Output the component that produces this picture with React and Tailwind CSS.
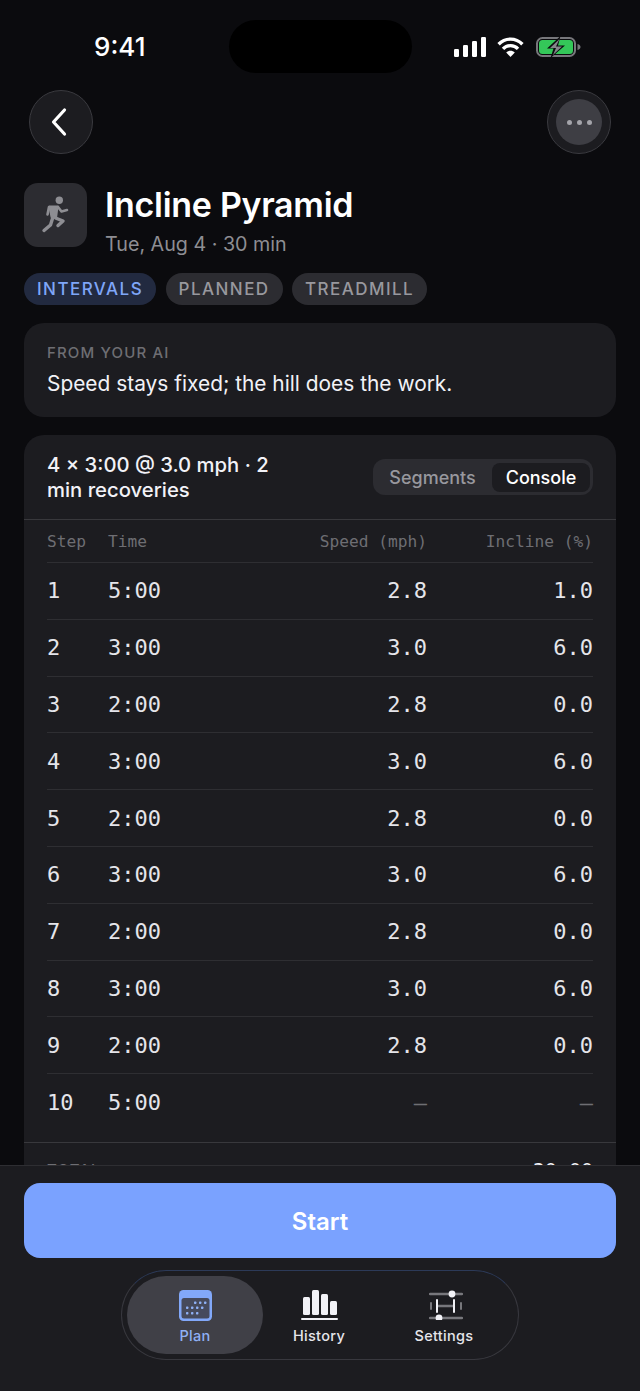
import React from "react";

const rows = [
  ["1", "5:00", "2.8", "1.0"],
  ["2", "3:00", "3.0", "6.0"],
  ["3", "2:00", "2.8", "0.0"],
  ["4", "3:00", "3.0", "6.0"],
  ["5", "2:00", "2.8", "0.0"],
  ["6", "3:00", "3.0", "6.0"],
  ["7", "2:00", "2.8", "0.0"],
  ["8", "3:00", "3.0", "6.0"],
  ["9", "2:00", "2.8", "0.0"],
  ["10", "5:00", "—", "—"],
];

const sans = "font-['Inter','Liberation_Sans',sans-serif]";
const mono = "font-['DejaVu_Sans_Mono','Liberation_Mono',monospace]";

function Signal() {
  return (
    <svg width="32" height="20" viewBox="0 0 32 20" fill="#fff">
      <rect x="0" y="12" width="5" height="8" rx="1.2" />
      <rect x="9" y="8" width="5" height="12" rx="1.2" />
      <rect x="18" y="4" width="5" height="16" rx="1.2" />
      <rect x="27" y="0" width="5" height="20" rx="1.2" />
    </svg>
  );
}

function Wifi() {
  return (
    <svg width="27" height="20" viewBox="0 0 27 20" fill="none" stroke="#fff" strokeWidth="3.4">
      <path d="M1.6 7.2 C8.2 0.4 18.8 0.4 25.4 7.2" />
      <path d="M6 11.8 C10 7.6 17 7.6 21 11.8" />
      <path d="M13.5 20 L9.2 15.4 C11.6 13.2 15.4 13.2 17.8 15.4 Z" fill="#fff" stroke="none" />
    </svg>
  );
}

function Battery() {
  return (
    <svg width="45" height="20" viewBox="0 0 45 20" fill="none">
      <rect x="1" y="1" width="38" height="18" rx="5.5" stroke="#77777b" strokeWidth="2" />
      <rect x="3" y="3" width="34" height="14" rx="3.5" fill="#34c759" />
      <path d="M41.5 7 C43.5 7.5 44.5 8.6 44.5 10 C44.5 11.4 43.5 12.5 41.5 13 Z" fill="#77777b" />
      <path d="M24.5 -1 L11 11.5 H17.5 L14.5 21 L29 8.5 H22 Z" fill="#0b0b0e" />
      <path d="M23.5 2 L14 11 H20 L17 18 L26 9.5 H20 Z" fill="#85858a" />
    </svg>
  );
}

function Runner() {
  return (
    <svg width="30" height="38" viewBox="0 0 30 38" fill="none" stroke="#8e8e93" strokeLinecap="round" strokeLinejoin="round">
      <circle cx="18.3" cy="4.2" r="3.7" fill="#8e8e93" stroke="none" />
      <path d="M8.5 10.5 H16.5 L15 22 L10.5 21 Z" fill="#8e8e93" strokeWidth="2" />
      <path d="M8 11 L6.5 18.5" strokeWidth="2.6" />
      <path d="M17 11 L20.5 15.5 L26 14" strokeWidth="2.6" />
      <path d="M14.5 22 L22 25 L17 29.5" strokeWidth="3.4" />
      <path d="M11.5 22.5 L9.5 29 L3 34.5" strokeWidth="3.4" />
    </svg>
  );
}

function CalendarIcon() {
  return (
    <svg width="33" height="31" viewBox="0 0 33 31">
      <rect width="33" height="31" rx="4.5" fill="#82a8f9" />
      <rect x="2.5" y="8" width="28" height="20.5" rx="2.5" fill="#464a5c" />
      <g fill="#8fb0f5">
        {[[15, 11.5], [20, 11.5], [25, 11.5], [7, 16.5], [12, 16.5], [17, 16.5], [22, 16.5], [7, 22], [12, 22], [17, 22]].map(([x, y]) => (
          <rect key={`${x}-${y}`} x={x} y={y} width="2.4" height="2.4" rx="0.7" />
        ))}
      </g>
    </svg>
  );
}

function ChartIcon() {
  return (
    <svg width="37" height="30" viewBox="0 0 37 30" fill="#f2f2f7">
      <rect x="2" y="7" width="7" height="18" rx="1.5" />
      <rect x="11" y="0" width="7" height="25" rx="1.5" />
      <rect x="20" y="4" width="7" height="21" rx="1.5" />
      <rect x="29" y="11" width="7" height="14" rx="1.5" />
      <rect x="0" y="28" width="37" height="2" rx="1" />
    </svg>
  );
}

function SettingsIcon() {
  return (
    <svg className="ml-[4px]" width="34" height="30" viewBox="0 0 34 30" fill="none" strokeLinecap="round">
      <path d="M1 4 H33 M1 28 H33 M9 16 H24" stroke="#77777c" strokeWidth="2.4" />
      <path d="M2 13 V19 M32 13 V19" stroke="#77777c" strokeWidth="2" />
      <path d="M8 10 V22 M25 10 V22" stroke="#f2f2f7" strokeWidth="2" />
      <circle cx="23" cy="4" r="3.4" fill="#f2f2f7" />
      <circle cx="10" cy="28" r="3.4" fill="#f2f2f7" />
    </svg>
  );
}

function Chip({ children, blue }) {
  return (
    <span
      className={`flex h-8 items-center rounded-full px-[13px] pt-[2px] text-[17px] font-medium tracking-[1.45px] ${
        blue ? "bg-[#222a40] text-[#7fa6f8]" : "bg-[#2c2c31] text-[#98989e]"
      }`}
    >
      {children}
    </span>
  );
}

function NavItem({ icon, label, active, className }) {
  return (
    <div
      className={`flex h-[78px] shrink-0 flex-col items-center rounded-full pt-[13px] ${className} ${
        active ? "bg-[#404047]" : ""
      }`}
    >
      <div className="flex h-[32px] items-center">{icon}</div>
      <span className={`mt-[6px] text-[14.5px] leading-[18px] font-medium tracking-[0.3px] ${active ? "text-[#8fb0f5]" : "text-[#e5e5ea]"}`}>
        {label}
      </span>
    </div>
  );
}

export default function App() {
  return (
    <div className={`${sans} flex h-[1391px] w-[640px] flex-col overflow-hidden bg-[#0b0b0e] text-white`}>
      <div className="flex min-h-0 flex-1 flex-col overflow-hidden">
        <div className="flex h-[90px] shrink-0 pl-[94px] pr-[59px]">
          <span className="mt-[30px] w-[135px] text-[26px] leading-[34px] font-medium">9:41</span>
          <div className="mt-[20px] h-[53px] w-[183px] rounded-full bg-black" />
          <div className="mt-[37px] ml-[42px] flex h-5 items-start gap-[11px]">
            <Signal />
            <Wifi />
            <span className="ml-px"><Battery /></span>
          </div>
        </div>

        <div className="flex shrink-0 items-start justify-between pl-[29px] pr-[29px]">
          <div className="flex h-16 w-16 items-center justify-center rounded-full border border-[#3a3a3f] bg-[#1c1c20]">
            <svg width="24" height="30" viewBox="0 0 24 30" fill="none" stroke="#fff" strokeWidth="3.2" strokeLinecap="round" strokeLinejoin="round">
              <path d="M15.5 3 L4.5 15 L15.5 27" />
            </svg>
          </div>
          <div className="flex h-16 w-16 items-center justify-center rounded-full border border-[#3a3a3f] bg-[#1c1c20]">
            <div className="flex h-[46px] w-[46px] items-center justify-center gap-[5px] rounded-full bg-[#3e3e44]">
              <span className="h-[5px] w-[5px] rounded-full bg-[#a4a4aa]" />
              <span className="h-[5px] w-[5px] rounded-full bg-[#a4a4aa]" />
              <span className="h-[5px] w-[5px] rounded-full bg-[#a4a4aa]" />
            </div>
          </div>
        </div>

        <div className="mt-[29px] flex shrink-0 items-start gap-[18px] px-6">
          <div className="flex h-16 w-[63px] items-center justify-center rounded-[14px] bg-[#2c2c31]">
            <Runner />
          </div>
          <div>
            <h1 className="-mt-[1px] text-[34px] leading-[46px] font-semibold tracking-[-0.3px]">Incline Pyramid</h1>
            <p className="mt-[4px] text-[19.7px] leading-[24px] text-[#8e8e93]">Tue, Aug 4 · 30 min</p>
          </div>
        </div>

        <div className="mt-[17px] flex shrink-0 gap-[9.5px] px-6">
          <Chip blue>INTERVALS</Chip>
          <Chip>PLANNED</Chip>
          <Chip>TREADMILL</Chip>
        </div>

        <div className="mx-6 mt-[18px] h-[94px] shrink-0 rounded-[20px] bg-[#1c1c20] px-[23px] pt-[21px]">
          <p className="text-[15px] leading-[18px] font-medium tracking-[1.15px] text-[#6e6e73]">FROM YOUR AI</p>
          <p className="mt-[8px] text-[20.9px] leading-[28px] text-[#f2f2f7]">Speed stays fixed; the hill does the work.</p>
        </div>

        <div className="mx-6 mt-[18px] shrink-0 rounded-[20px] bg-[#1c1c20]">
          <div className="flex h-[85px] items-center justify-between border-b border-[#38383c] pr-[23px] pl-[23px]">
            <p className="w-[240px] text-[20.25px] leading-[25px] font-medium text-[#f2f2f7]">4 × 3:00 @ 3.0 mph · 2 min recoveries</p>
            <div className="flex h-9 w-[220px] items-center rounded-[12px] bg-[#2c2c31] pr-[3px]">
              <span className="flex-1 text-center text-[18px] font-medium text-[#98989e]">Segments</span>
              <span className="flex h-[29px] w-[98px] items-center justify-center rounded-[8px] bg-[#1c1c20] text-[18px] font-medium text-white">Console</span>
            </div>
          </div>
          <div className={`${mono} px-[23px]`}>
            <div className="grid h-[43px] grid-cols-[61px_1fr_166px_166px] items-center border-b border-[#2e2e32] pt-[2px] text-[16.2px] text-[#6e6e73]">
              <span>Step</span>
              <span>Time</span>
              <span className="text-right">Speed (mph)</span>
              <span className="text-right">Incline (%)</span>
            </div>
            {rows.map((r, i) => (
              <div
                key={r[0]}
                className={`grid h-[56.8px] grid-cols-[61px_1fr_166px_166px] items-center text-[22px] text-[#e5e5ea] ${
                  i < rows.length - 1 ? "border-b border-[#2e2e32]" : ""
                }`}
              >
                <span>{r[0]}</span>
                <span>{r[1]}</span>
                <span className={`text-right ${r[2] === "—" ? "text-[#6e6e73]" : ""}`}>{r[2]}</span>
                <span className={`text-right ${r[3] === "—" ? "text-[#6e6e73]" : ""}`}>{r[3]}</span>
              </div>
            ))}
          </div>
          <div className="mt-[11px] flex h-[57px] items-center justify-between border-t border-[#38383c] px-[23px] pb-[1px]">
            <span className="text-[15px] font-medium tracking-[1.15px] text-[#6e6e73]">TOTAL</span>
            <span className={`${mono} text-[20px] text-[#f2f2f7]`}>30:00</span>
          </div>
        </div>
      </div>

      <div className="flex h-[226px] shrink-0 flex-col items-center border-t border-[#2e2e32] bg-[#1c1c20] px-6 pt-[17px]">
        <button className="flex h-[75px] w-full items-center justify-center rounded-[16px] bg-[#7aa2ff] pt-[2px] text-[24px] font-semibold text-white">
          Start
        </button>
        <nav className="mt-3 flex h-[90px] w-[398px] items-center rounded-full border border-[#38383e] border-t-[#2c3a58] bg-[#1c1c20] px-[5px]">
          <NavItem active className="w-[136px]" icon={<CalendarIcon />} label="Plan" />
          <NavItem className="w-[112px]" icon={<ChartIcon />} label="History" />
          <NavItem className="w-[138px]" icon={<SettingsIcon />} label="Settings" />
        </nav>
      </div>
    </div>
  );
}
